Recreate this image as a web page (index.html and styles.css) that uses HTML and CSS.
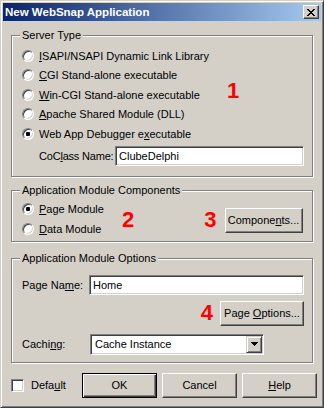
FILE: index.html
```html
<!DOCTYPE html>
<html lang="en">
<head>
  <meta charset="UTF-8">
  <meta name="viewport" content="width=device-width, initial-scale=1.0">
  <title>New WebSnap Application</title>
  <link rel="stylesheet" href="styles.css">
</head>
<body>

<div class="window">
  <div class="titlebar">
    <span class="title">New WebSnap Application</span>
    <span class="close-btn">
      <svg width="8" height="7" viewBox="0 0 8 7" shape-rendering="crispEdges">
        <path d="M0 0h2v1h-2z M6 0h2v1h-2z M1 1h2v1h-2z M5 1h2v1h-2z M2 2h4v1h-4z M3 3h2v1h-2z M2 4h4v1h-4z M1 5h2v1h-2z M5 5h2v1h-2z M0 6h2v1h-2z M6 6h2v1h-2z" fill="#000"/>
      </svg>
    </span>
  </div>

  <div class="client">
    <!-- Server Type -->
    <div class="group group-server">
      <div class="group-title">Server Type</div>
      <div class="server-body">
        <div class="radio-list server-list">
          <div class="radio-row"><span class="radio"></span><span><u>I</u>SAPI/NSAPI Dynamic Link Library</span></div>
          <div class="radio-row"><span class="radio"></span><span><u>C</u>GI Stand-alone executable</span></div>
          <div class="radio-row"><span class="radio"></span><span><u>W</u>in-CGI Stand-alone executable</span></div>
          <div class="radio-row"><span class="radio"></span><span><u>A</u>pache Shared Module (DLL)</span></div>
          <div class="radio-row"><span class="radio checked"><span class="dot"></span></span><span>Web App Debugger e<u>x</u>ecutable</span></div>
        </div>
        <span class="marker marker-1">1</span>
      </div>
      <div class="field-row coclass-row">
        <span class="field-label coclass-label">CoC<u>l</u>ass Name:</span>
        <span class="edit coclass-edit"><span>ClubeDelphi</span></span>
      </div>
    </div>

    <!-- Application Module Components -->
    <div class="group group-modules">
      <div class="group-title">Application Module Components</div>
      <div class="modules-body">
        <div class="radio-list modules-list">
          <div class="radio-row"><span class="radio checked"><span class="dot"></span></span><span><u>P</u>age Module</span></div>
          <div class="radio-row"><span class="radio"></span><span><u>D</u>ata Module</span></div>
        </div>
        <span class="marker marker-2">2</span>
        <span class="marker marker-3">3</span>
        <span class="btn btn-components"><span>Compone<u>n</u>ts...</span></span>
      </div>
    </div>

    <!-- Application Module Options -->
    <div class="group group-options">
      <div class="group-title">Application Module Options</div>
      <div class="field-row page-row">
        <span class="field-label page-label">Page Na<u>m</u>e:</span>
        <span class="edit page-edit"><span>Home</span></span>
      </div>
      <div class="options-row">
        <span class="marker marker-4">4</span>
        <span class="btn btn-options"><span>Page <u>O</u>ptions...</span></span>
      </div>
      <div class="field-row caching-row">
        <span class="field-label caching-label">Cachi<u>n</u>g:</span>
        <span class="combo">
          <span class="combo-text">Cache Instance</span>
          <span class="combo-btn">
            <svg width="7" height="4" viewBox="0 0 7 4" shape-rendering="crispEdges">
              <path d="M0 0h7v1h-7z M1 1h5v1h-5z M2 2h3v1h-3z M3 3h1v1h-1z" fill="#000"/>
            </svg>
          </span>
        </span>
      </div>
    </div>

    <!-- Bottom buttons -->
    <div class="bottom-row">
      <div class="check-row"><span class="checkbox"></span><span>Defa<u>u</u>lt</span></div>
      <div class="buttons">
        <span class="btn btn-default"><span>OK</span></span>
        <span class="btn"><span>Cancel</span></span>
        <span class="btn"><span><u>H</u>elp</span></span>
      </div>
    </div>
  </div>
</div>

</body>
</html>
```

FILE: styles.css
```css
/* General Styles */
* {
  box-sizing: border-box;
}
body {
  margin: 0;
  background-color: #d4d0c8;
  font-family: "Liberation Sans", Arial, sans-serif;
  font-size: 11px;
  color: #000;
}
u {
  text-decoration-thickness: 1px;
  text-underline-offset: 1px;
}

/* Window frame */
.window {
  width: 324px;
  height: 408px;
  border: 1px solid;
  border-color: #d4d0c8 #404040 #404040 #d4d0c8;
  box-shadow: inset 1px 1px #fff, inset -1px -1px #808080;
  padding: 2px;
  display: flex;
  flex-direction: column;
}
.titlebar {
  height: 18px;
  display: flex;
  align-items: center;
  padding-left: 2px;
  background: linear-gradient(to right, #0a246a, #a6caf0);
  color: #fff;
  font-weight: bold;
  font-size: 11.5px;
}
.close-btn {
  margin-left: auto;
  margin-right: 2px;
  width: 16px;
  height: 14px;
  display: flex;
  align-items: center;
  justify-content: center;
  background-color: #d4d0c8;
  border: 1px solid;
  border-color: #fff #404040 #404040 #fff;
  box-shadow: inset -1px -1px #808080;
}
.close-btn svg {
  display: block;
}
.client {
  flex: 1;
  display: flex;
  flex-direction: column;
}

/* Group boxes */
.group {
  margin: 0 8px;
  border: 1px solid #808080;
  box-shadow: inset 1px 1px #fff, 1px 1px #fff;
  padding: 0 8px 0 10px;
}
.group-title {
  width: max-content;
  margin: -7px 0 0 -2px;
  padding: 0 2px;
  line-height: 13px;
  background-color: #d4d0c8;
}
.group-server {
  margin-top: 14px;
  padding-bottom: 10px;
}
.group-modules {
  margin-top: 13px;
  padding-bottom: 2px;
}
.group-options {
  margin-top: 16px;
  padding-bottom: 7px;
}

/* Radio buttons */
.radio-row {
  height: 19.5px;
  display: flex;
  align-items: center;
  gap: 5px;
  white-space: nowrap;
}
.radio {
  width: 12px;
  height: 12px;
  flex: none;
  border-radius: 50%;
  border: 1px solid;
  border-color: #808080 #fff #fff #808080;
  box-shadow: inset 1px 1px #404040, inset -1px -1px #d4d0c8;
  background-color: #fff;
  display: flex;
  align-items: center;
  justify-content: center;
}
.dot {
  width: 4px;
  height: 4px;
  border-radius: 1px;
  background-color: #000;
}

/* Red step numbers */
.marker {
  color: #f00;
  font-weight: bold;
  font-size: 22px;
  line-height: 1;
}

.server-body {
  display: flex;
  margin-top: 4px;
}
.server-list {
  width: 205px;
}
.marker-1 {
  margin-top: 34px;
}

/* Edit fields */
.field-row {
  display: flex;
  align-items: center;
}
.field-label {
  flex: none;
  white-space: nowrap;
}
.edit,
.combo {
  height: 20px;
  display: flex;
  align-items: center;
  background-color: #fff;
  border: 1px solid;
  border-color: #808080 #fff #fff #808080;
  box-shadow: inset 1px 1px #404040, inset -1px -1px #d4d0c8;
  padding-left: 3px;
}
.coclass-row {
  margin-top: 2px;
  padding-left: 17px;
}
.coclass-label {
  width: 76px;
  letter-spacing: -0.2px;
}
.coclass-edit {
  width: 191px;
}

.modules-body {
  display: flex;
  align-items: center;
  margin-top: 3px;
}
.modules-list {
  width: 100px;
}
.marker-2 {
  margin-top: 2px;
}
.marker-3 {
  margin: 2px 0 0 70px;
}

/* Push buttons */
.btn {
  width: 75px;
  height: 25px;
  flex: none;
  display: flex;
  align-items: center;
  justify-content: center;
  white-space: nowrap;
  background-color: #d4d0c8;
  border: 1px solid;
  border-color: #fff #404040 #404040 #fff;
  box-shadow: inset -1px -1px #808080;
}
.btn-default {
  border-color: #000;
  box-shadow: inset 1px 1px #fff, inset -1px -1px #404040, inset -2px -2px #808080;
}
.btn-components {
  width: 78px;
  margin: 2px 0 0 8px;
}

.page-row {
  margin-top: 10px;
}
.page-label {
  width: 67px;
}
.page-edit {
  flex: 1;
}
.options-row {
  display: flex;
  align-items: center;
  justify-content: flex-end;
  margin-top: 6px;
}
.marker-4 {
  margin-right: 7px;
}
.btn-options {
  width: 84px;
}
.caching-row {
  margin-top: 8px;
}
.caching-label {
  width: 68px;
}
.combo {
  width: 174px;
  height: 21px;
  padding-left: 4px;
  padding-right: 1px;
}
.combo-text {
  flex: 1;
}
.combo-btn {
  width: 16px;
  height: 17px;
  display: flex;
  align-items: center;
  justify-content: center;
  background-color: #d4d0c8;
  border: 1px solid;
  border-color: #d4d0c8 #404040 #404040 #d4d0c8;
  box-shadow: inset 1px 1px #fff, inset -1px -1px #808080;
}

/* Bottom row */
.bottom-row {
  display: flex;
  align-items: center;
  margin-top: 10px;
  padding: 0 4px 0 8px;
}
.check-row {
  display: flex;
  align-items: center;
  gap: 7px;
}
.checkbox {
  width: 13px;
  height: 13px;
  background-color: #fff;
  border: 1px solid;
  border-color: #808080 #fff #fff #808080;
  box-shadow: inset 1px 1px #404040, inset -1px -1px #d4d0c8;
}
.buttons {
  margin-left: auto;
  display: flex;
  gap: 5px;
}
```
